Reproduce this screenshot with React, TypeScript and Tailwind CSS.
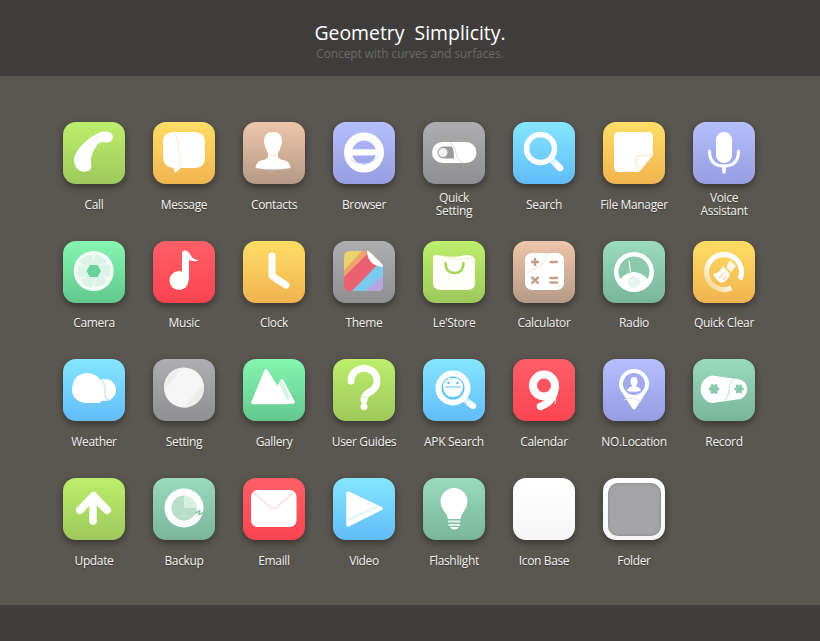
import type { ReactNode } from 'react'

const W = '#ffffff'

function Svg({ children }: { children: ReactNode }) {
  return (
    <svg viewBox="0 0 62 62" className="absolute inset-0 w-full h-full" fill="none">
      {children}
    </svg>
  )
}

const CallIcon = () => (
  <Svg>
    <path d="M27 16Q38 8 46 10Q51 12 49.500 17Q48 21 43 20.500L40 20Q36 20 33.500 24Q29 30 28 36Q28 41 28.500 44Q28 49 23 49.500Q17 50.500 13.500 46Q9.500 40 12 33Q17 23 27 16Z" fill={W} />
    <path d="M40 13Q28 17 20 30" stroke="#f0f9df" strokeWidth="1" />
  </Svg>
)

const MessageIcon = () => (
  <Svg>
    <path d="M22 10H41Q52 10 52 21V35Q52 46 41 46H28L22 51L20.500 46Q10 45 10 34V20Q10 10 22 10Z" fill={W} />
    <path d="M20 10Q25 13 25 22Q25 30 27 36Q28 42 25 47" stroke="#f9eed6" strokeWidth="1.200" />
  </Svg>
)

const ContactsIcon = () => (
  <Svg>
    <path d="M30 10Q39 10 39 19Q39 22 38 24Q37 28 35 31V35Q37 38 42 38.500Q47 40 47.500 46Q30 49 12.500 46Q13 40 18 38.500Q23 38 25 35V31Q23 28 22 24Q21 22 21 19Q21 10 30 10Z" fill={W} />
    <path d="M25 32Q30 36 35 32" stroke="#f3e3d6" strokeWidth="1" />
  </Svg>
)

const BrowserIcon = () => (
  <Svg>
    <circle cx="31" cy="30.500" r="16" stroke={W} strokeWidth="8" />
    <path d="M14 27.300H38Q44 27.300 50 27.500V30Q45 33.500 38 33.500H20Q15 33 13 30Z" fill={W} />
    <path d="M17 37Q22 42 31 42Q40 42 46 33" stroke="#dfe3fb" strokeWidth="1.200" />
  </Svg>
)

const QuickSettingIcon = () => (
  <Svg>
    <rect x="9" y="20" width="44.500" height="21" rx="10.500" fill={W} />
    <path d="M20.500 24.500H29Q31 28 31 36.500H20.500A6 6 0 0 1 20.500 24.500Z" fill="#9b9b9e" />
    <circle cx="20" cy="30.500" r="4.500" fill="#f4f4f4" />
    <path d="M27 21Q32 24 33 31Q34 38 40 41" stroke="#e4e4e4" strokeWidth="1.200" />
  </Svg>
)

const SearchIcon = () => (
  <Svg>
    <path d="M38 37L47 46" stroke="#d9f3ff" strokeWidth="6.500" strokeLinecap="round" />
    <path d="M44 43L47 46" stroke={W} strokeWidth="6.500" strokeLinecap="round" />
    <circle cx="27.500" cy="26.500" r="14" stroke={W} strokeWidth="5.500" />
  </Svg>
)

const FileIcon = () => (
  <Svg>
    <path d="M16 10H45Q50 10 50 15V33L36 50H16Q11 50 11 45V15Q11 10 16 10Z" fill={W} />
    <path d="M50 33Q38 32 33 35Q32 42 36 50Z" fill="#fffdf8" stroke="#f7e6c0" strokeWidth="1" strokeLinejoin="round" />
  </Svg>
)

const VoiceIcon = () => (
  <Svg>
    <rect x="23" y="10" width="16" height="31" rx="8" fill={W} />
    <path d="M16.500 29Q16.500 44 31 44Q45.500 44 45.500 29" stroke={W} strokeWidth="3" strokeLinecap="round" />
    <path d="M31 44V50" stroke={W} strokeWidth="3.500" strokeLinecap="round" />
  </Svg>
)

const CameraIcon = () => (
  <Svg>
    <circle cx="30.700" cy="30" r="20" fill="#f3fcf7" />
    {[0, 60, 120, 180, 240, 300].map(a => (
      <path
        key={a}
        d="M27 24L33 13Q41 15 44 22L34.500 24Z"
        fill="#dcf4e7"
        transform={`rotate(${a} 30.700 30)`}
      />
    ))}
    <path d="M27 24H34.500L38 30L34.500 36H27L23.500 30Z" fill="#6bd097" />
  </Svg>
)

const MusicIcon = () => (
  <Svg>
    <circle cx="26" cy="39.500" r="9.500" fill={W} />
    <path d="M29 39V12Q29 9 32 9.500Q36 10 38 15Q40 18 46 19.500Q41 21 36 19V39Z" fill={W} />
  </Svg>
)

const ClockIcon = () => (
  <Svg>
    <path d="M29 15V35L43 44" stroke={W} strokeWidth="7" strokeLinecap="round" strokeLinejoin="round" />
    <path d="M26 36Q30 38 33 43" stroke="#f9e3b5" strokeWidth="1" />
  </Svg>
)

const ThemeIcon = () => (
  <Svg>
    <defs>
      <clipPath id="theme-page">
        <path d="M17 10H35L50 25V45Q50 50 45 50H16Q11 50 11 45V16Q11 10 17 10Z" />
      </clipPath>
    </defs>
    <g clipPath="url(#theme-page)">
      <rect x="10" y="9" width="42" height="42" fill="#ecd26f" />
      <path d="M30 9H52V12L12 45H10V30Z" fill="#eea36f" />
      <path d="M38 9H52V25L20 51H10V37Z" fill="#ea6272" />
      <path d="M50 18H52V38L38 51H18Z" fill="#7bc9ec" />
      <path d="M52 33V51H31Z" fill="#b9a4e2" />
    </g>
    <path d="M34 10Q36 10 38 12L48 22Q50 24 50 26Q41 25 38 21Q34 17 34 10Z" fill={W} />
  </Svg>
)

const StoreIcon = () => (
  <Svg>
    <path d="M14 14Q28 17 38 15Q46 13 49 15Q52 16 52 20V42Q52 49 44 49H18Q10 49 10 42V18Q10 13 14 14Z" fill="#fffef8" />
    <path d="M20 15Q34 20 50 17" stroke="#e3f3c8" strokeWidth="1" />
    <path d="M22.500 22Q23 32 31.500 32Q40 32 40.500 22" stroke="#a4d35d" strokeWidth="2.500" strokeLinecap="round" />
  </Svg>
)

const CalculatorIcon = () => (
  <Svg>
    <rect x="12" y="12" width="39" height="37" rx="7" fill={W} />
    <path d="M34 12Q33 22 27 25Q20 28 14 32" stroke="#f5e4d6" strokeWidth="1" />
    <g stroke="#c4a087" strokeWidth="2.500">
      <path d="M18 21H26M22 17V25" />
      <path d="M36.500 21H45" />
      <path d="M18.500 36L25.500 42.500M25.500 36L18.500 42.500" />
      <path d="M36.500 37H45M36.500 41.500H45" />
    </g>
  </Svg>
)

const RadioIcon = () => (
  <Svg>
    <circle cx="31" cy="31" r="20" fill={W} />
    <path d="M17.200 38A15.500 15.500 0 1 1 44.800 38Q38 31 31 31Q24 31 17.200 38Z" fill="#8bc8ac" />
    <circle cx="31" cy="41" r="6" fill="#e6f5ed" />
    <path d="M26 20L27.500 31" stroke={W} strokeWidth="1.200" />
  </Svg>
)

const QuickClearIcon = () => (
  <Svg>
    <defs>
      <linearGradient id="ring-fade" x1="0.100" y1="0.900" x2="0.900" y2="0.100">
        <stop offset="0" stopColor="#ffffff" stopOpacity="0.400" />
        <stop offset="0.450" stopColor="#ffffff" />
      </linearGradient>
    </defs>
    <path d="M38.400 46.900A17.500 17.500 0 1 1 46.900 38.400" stroke="url(#ring-fade)" strokeWidth="5" />
    <path d="M37 19L43 25L38 31Q36.500 29 35 28.500L33.500 27Q34 24 37 19Z" fill="#fff8e8" />
    <path d="M30 25L37 33Q35 40 28 42Q23 39 20 33Q27 32 30 25Z" fill={W} />
    <path d="M26 37L30 33M30 39L33 35" stroke="#f2be5e" strokeWidth="1" />
  </Svg>
)

const WeatherIcon = () => (
  <Svg>
    <circle cx="42" cy="31" r="11" fill={W} />
    <path d="M24 14Q33 14 38 22Q41 28 41 36Q41 42 36 44H22Q9 42 9 30Q10 15 24 14Z" fill={W} />
    <path d="M38 20Q43 26 42 34Q42 40 46 41" stroke="#c5ecfb" strokeWidth="1.500" />
  </Svg>
)

const SettingIcon = () => (
  <Svg>
    <defs>
      <clipPath id="setting-disc">
        <circle cx="31" cy="28.500" r="20" />
      </clipPath>
    </defs>
    <circle cx="31" cy="28.500" r="20" fill="#f6f6f6" />
    <g clipPath="url(#setting-disc)">
      <path d="M10 8H30L11 32Z" fill="#efedea" />
      <path d="M51 24V49H30Z" fill="#efedea" />
    </g>
  </Svg>
)

const GalleryIcon = () => (
  <Svg>
    <path d="M39 22L50 43H27Z" fill={W} stroke={W} strokeWidth="3.500" strokeLinejoin="round" />
    <path d="M23 12L43 43.500H10Z" fill={W} stroke={W} strokeWidth="3.500" strokeLinejoin="round" />
    <path d="M38 24L45 39" stroke="#d8f4e3" strokeWidth="4" strokeLinecap="round" />
  </Svg>
)

const GuidesIcon = () => (
  <Svg>
    <path d="M18 22A13 12.500 0 1 1 38.500 32Q31 35.500 31 41" stroke={W} strokeWidth="7" strokeLinecap="round" />
    <circle cx="31" cy="47.500" r="3.500" fill={W} />
    <path d="M27.500 38H34.500" stroke="#d9eeb2" strokeWidth="1" />
  </Svg>
)

const ApkIcon = () => (
  <Svg>
    <path d="M40 39L50 47" stroke="#d9f3ff" strokeWidth="6" strokeLinecap="round" />
    <path d="M47 45L50 47" stroke={W} strokeWidth="6" strokeLinecap="round" />
    <circle cx="30" cy="29" r="14.500" fill="#5cc3f6" stroke={W} strokeWidth="6" />
    <path d="M20 27Q21 19 30 19Q39 19 40 27V28Q39 38 30 38Q21 38 20 28Z" fill={W} />
    <path d="M22 28H38" stroke="#5cc3f6" strokeWidth="1" />
    <circle cx="25.500" cy="24" r="1.300" fill="#5cc3f6" />
    <circle cx="34.500" cy="24" r="1.300" fill="#5cc3f6" />
    <path d="M24 16.500L26 19.500M36 16.500L34 19.500" stroke={W} strokeWidth="1.200" />
  </Svg>
)

const CalendarIcon = () => (
  <Svg>
    <circle cx="31" cy="26.500" r="11" stroke={W} strokeWidth="8" />
    <path d="M42 27Q42 42 27.500 47.500" stroke={W} strokeWidth="7.500" strokeLinecap="round" />
    <path d="M41 36Q44 39 42 45" stroke="#ffd9dc" strokeWidth="1" />
  </Svg>
)

const LocationIcon = () => (
  <Svg>
    <path d="M31 10A15 15 0 0 1 46 25Q46 30 42 35L33 49Q31 52 29 49L20 35Q16 30 16 25A15 15 0 0 1 31 10Z" fill={W} />
    <circle cx="31" cy="25" r="11" fill="#a2aaea" />
    <path d="M31 18Q34.500 18 34.500 22Q34.500 25 33 26.500V27.500Q37 28 38 32Q31 33.500 24 32Q25 28 29 27.500V26.500Q27.500 25 27.500 22Q27.500 18 31 18Z" fill={W} />
    <path d="M21 41Q30 36 38 43" stroke="#d9ddfa" strokeWidth="1" />
  </Svg>
)

const Gear = ({ x, y, r, fill }: { x: number; y: number; r: number; fill: string }) => (
  <g fill={fill}>
    <circle cx={x} cy={y} r={r * 0.7} />
    {[0, 60, 120, 180, 240, 300].map(a => (
      <circle
        key={a}
        cx={x + r * 0.75 * Math.cos((a * Math.PI) / 180)}
        cy={y + r * 0.75 * Math.sin((a * Math.PI) / 180)}
        r={r * 0.33}
      />
    ))}
  </g>
)

const RecordIcon = () => (
  <Svg>
    <path d="M19 16.500L44 20A9.800 9.800 0 0 1 44 40.500L19 44A14 14 0 0 1 19 16.500Z" fill={W} />
    <path d="M41 20Q36 24 36 31Q36 36 32 42" stroke="#cdebdc" strokeWidth="1.200" />
    <Gear x={21} y={30} r={5} fill="#8cc9ac" />
    <Gear x={46} y={30} r={4.500} fill="#8cc9ac" />
  </Svg>
)

const UpdateIcon = () => (
  <Svg>
    <path d="M30 21V43" stroke={W} strokeWidth="7.500" strokeLinecap="round" />
    <path d="M17 32L30.500 18L44 32" stroke={W} strokeWidth="8" strokeLinecap="round" strokeLinejoin="round" />
    <path d="M31 17L35 21" stroke="#e3f4bd" strokeWidth="1" />
  </Svg>
)

const BackupIcon = () => (
  <Svg>
    <circle cx="31" cy="30" r="12.500" fill="#b9dfcc" />
    <path d="M31 30V17.500A12.500 12.500 0 0 1 43.500 30Z" fill="#d7efe3" />
    <circle cx="31" cy="30" r="16" stroke={W} strokeWidth="7" />
    <path d="M42 35L47 32.500L45.500 36.500L51 34.500" stroke="#8ac6ab" strokeWidth="1.500" strokeLinejoin="round" />
  </Svg>
)

const EmailIcon = () => (
  <Svg>
    <rect x="8" y="12" width="45.500" height="37" rx="6.500" fill={W} />
    <path d="M10 14L27 29Q30.500 32 34 29L51 14" stroke="#fbdadc" strokeWidth="1.200" />
  </Svg>
)

const VideoIcon = () => (
  <Svg>
    <path d="M15 15L48 30.500L15 47Z" fill={W} stroke={W} strokeWidth="3.500" strokeLinejoin="round" />
    <path d="M15 42L46 28" stroke="#d8f2fe" strokeWidth="1.500" />
  </Svg>
)

const FlashlightIcon = () => (
  <Svg>
    <path d="M31 10A13.500 13.500 0 0 1 44.500 23.500Q44.500 28 41 33Q38 37 37.500 41H25Q24.500 37 21 33Q17.500 28 17.500 23.500A13.500 13.500 0 0 1 31 10Z" fill={W} />
    <path d="M25 42.500H37.500V44.500H25ZM25.500 46H37V48H25.500Z" fill="#e4f3ec" />
    <path d="M27 49H36Q34 51.500 31 51.500Q28.500 51.500 27 49Z" fill={W} />
  </Svg>
)

const FolderIcon = () => (
  <div className="absolute inset-[4.5px] rounded-[10px] bg-[#a4a4a7] shadow-[inset_0_0_3px_rgba(0,0,0,0.25)]" />
)

const green = 'from-[#bdee6c] to-[#9dc95c]'
const yellow = 'from-[#ffdd66] to-[#f0b450]'
const tan = 'from-[#eec6aa] to-[#b59a87]'
const purple = 'from-[#b5beff] to-[#969de0]'
const gray = 'from-[#aeaeb1] to-[#8f8f92]'
const blue = 'from-[#86e6ff] to-[#62bcf9]'
const mint = 'from-[#86f6b0] to-[#62c88e]'
const red = 'from-[#ff5f68] to-[#fb444f]'
const teal = 'from-[#9adabd] to-[#79b59b]'
const white = 'from-[#ffffff] to-[#f6f6f6]'

const apps: { label: ReactNode; color: string; icon?: ReactNode }[] = [
  { label: 'Call', color: green, icon: <CallIcon /> },
  { label: 'Message', color: yellow, icon: <MessageIcon /> },
  { label: 'Contacts', color: tan, icon: <ContactsIcon /> },
  { label: 'Browser', color: purple, icon: <BrowserIcon /> },
  { label: <>Quick<br />Setting</>, color: gray, icon: <QuickSettingIcon /> },
  { label: 'Search', color: blue, icon: <SearchIcon /> },
  { label: 'File Manager', color: yellow, icon: <FileIcon /> },
  { label: <>Voice<br />Assistant</>, color: purple, icon: <VoiceIcon /> },
  { label: 'Camera', color: mint, icon: <CameraIcon /> },
  { label: 'Music', color: red, icon: <MusicIcon /> },
  { label: 'Clock', color: yellow, icon: <ClockIcon /> },
  { label: 'Theme', color: gray, icon: <ThemeIcon /> },
  { label: "Le'Store", color: green, icon: <StoreIcon /> },
  { label: 'Calculator', color: tan, icon: <CalculatorIcon /> },
  { label: 'Radio', color: teal, icon: <RadioIcon /> },
  { label: 'Quick Clear', color: yellow, icon: <QuickClearIcon /> },
  { label: 'Weather', color: blue, icon: <WeatherIcon /> },
  { label: 'Setting', color: gray, icon: <SettingIcon /> },
  { label: 'Gallery', color: mint, icon: <GalleryIcon /> },
  { label: 'User Guides', color: green, icon: <GuidesIcon /> },
  { label: 'APK Search', color: blue, icon: <ApkIcon /> },
  { label: 'Calendar', color: red, icon: <CalendarIcon /> },
  { label: 'NO.Location', color: purple, icon: <LocationIcon /> },
  { label: 'Record', color: teal, icon: <RecordIcon /> },
  { label: 'Update', color: green, icon: <UpdateIcon /> },
  { label: 'Backup', color: teal, icon: <BackupIcon /> },
  { label: 'Emaill', color: red, icon: <EmailIcon /> },
  { label: 'Video', color: blue, icon: <VideoIcon /> },
  { label: 'Flashlight', color: teal, icon: <FlashlightIcon /> },
  { label: 'Icon Base', color: white },
  { label: 'Folder', color: white, icon: <FolderIcon /> },
]

export default function App() {
  return (
    <div className="flex flex-col h-screen w-full bg-[#5a5650] font-['Open_Sans',sans-serif] overflow-hidden">
      <header className="h-[76px] shrink-0 bg-[#403e3c] flex flex-col items-center pt-[20px]">
        <h1 className="text-[19.4px] leading-[26px] text-white whitespace-pre">Geometry  Simplicity.</h1>
        <p className="text-[11.8px] leading-[14px] text-[#6c6a67]">Concept with curves and surfaces.</p>
      </header>

      <main className="flex-1 pl-[49px] pt-[46px]">
        <div className="grid grid-cols-[repeat(8,90px)] auto-rows-[118.7px]">
          {apps.map((app, i) => (
            <div key={i} className="flex flex-col items-center">
              <div className={`relative w-[62px] h-[62px] rounded-[13px] bg-linear-to-b ${app.color} shadow-[0_3px_7px_rgba(0,0,0,0.38)]`}>
                {app.icon}
              </div>
              <div className="h-[40px] flex items-center text-center text-[12px] tracking-[-0.35px] leading-[13px] text-[#f2f1ef] [text-shadow:0_1px_1px_rgba(0,0,0,0.35)] whitespace-nowrap">
                <span>{app.label}</span>
              </div>
            </div>
          ))}
        </div>
      </main>

      <footer className="h-[36px] shrink-0 bg-[#403e3c]" />
    </div>
  )
}
